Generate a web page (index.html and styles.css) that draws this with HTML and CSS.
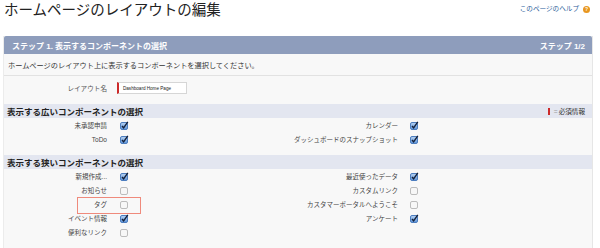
FILE: index.html
```html
<!DOCTYPE html>
<html lang="ja">
<head>
  <meta charset="UTF-8" />
  <title>ホームページのレイアウトの編集</title>
  <link rel="stylesheet" href="styles.css">
</head>
<body>

  <!-- Cabecera de página -->
  <div class="page-head">
    <h1>ホームページのレイアウトの編集</h1>
    <a class="help" href="#">このページのヘルプ <span class="help-icon">?</span></a>
  </div>

  <!-- Panel principal -->
  <div class="panel">
    <div class="panel-head">
      <span>ステップ 1. 表示するコンポーネントの選択</span>
      <span>ステップ 1/2</span>
    </div>

    <p class="intro">ホームページのレイアウト上に表示するコンポーネントを選択してください。</p>

    <div class="name-row">
      <label>レイアウト名</label>
      <span class="req-input">Dashboard Home Page</span>
    </div>

    <div class="section-head">
      <h3>表示する広いコンポーネントの選択</h3>
      <span class="legend"><i class="req-mark"></i><span class="eq">=</span> 必須情報</span>
    </div>
    <div class="opts">
      <div class="opt-row">
        <span class="lbl">未承認申請</span><span class="cb on"></span>
        <span class="lbl">カレンダー</span><span class="cb on"></span>
      </div>
      <div class="opt-row">
        <span class="lbl">ToDo</span><span class="cb on"></span>
        <span class="lbl">ダッシュボードのスナップショット</span><span class="cb on"></span>
      </div>
    </div>

    <div class="section-head second">
      <h3>表示する狭いコンポーネントの選択</h3>
    </div>
    <div class="opts">
      <div class="opt-row">
        <span class="lbl">新規作成...</span><span class="cb on"></span>
        <span class="lbl">最近使ったデータ</span><span class="cb on"></span>
      </div>
      <div class="opt-row">
        <span class="lbl">お知らせ</span><span class="cb"></span>
        <span class="lbl">カスタムリンク</span><span class="cb"></span>
      </div>
      <div class="opt-row marked">
        <span class="lbl">タグ</span><span class="cb"></span>
        <span class="lbl">カスタマーポータルへようこそ</span><span class="cb"></span>
        <span class="highlight"></span>
      </div>
      <div class="opt-row">
        <span class="lbl">イベント情報</span><span class="cb on"></span>
        <span class="lbl">アンケート</span><span class="cb on"></span>
      </div>
      <div class="opt-row">
        <span class="lbl">便利なリンク</span><span class="cb"></span>
        <span class="lbl"></span><span></span>
      </div>
    </div>
  </div>

  <script>
    // dibujar las casillas
    const CHECKED = '<svg width="9" height="9" viewBox="0 0 9 9"><defs><linearGradient id="g" x1="0" y1="0" x2="0" y2="1"><stop offset="0" stop-color="#b9d4f3"/><stop offset="1" stop-color="#5d93d8"/></linearGradient></defs><rect x="0.5" y="1.5" width="7" height="7" rx="1.5" fill="url(#g)" stroke="#4c7dbf"/><path d="M2 5 L3.6 6.8 L7.8 0.8" fill="none" stroke="#14213a" stroke-width="1.4"/></svg>';
    const EMPTY = '<svg width="9" height="9" viewBox="0 0 9 9"><rect x="0.5" y="1.5" width="7" height="7" rx="1.5" fill="#f7f7f7" stroke="#bcbcbc"/></svg>';
    document.querySelectorAll('.cb').forEach(el => {
      el.innerHTML = el.classList.contains('on') ? CHECKED : EMPTY;
    });
  </script>

</body>
</html>
```

FILE: styles.css
```css
/* Página de edición de layout */
body {
  margin: 0;
  background: #fff;
  color: #333;
  font-family: "Liberation Sans", "Noto Sans CJK JP", sans-serif;
}

.page-head {
  display: flex;
  justify-content: space-between;
  align-items: flex-start;
  height: 36px;
  padding: 0 10px 0 4px;
}

.page-head h1 {
  margin: 1px 0 0 0;
  font-size: 14.5px;
  line-height: 18px;
  font-weight: normal;
  color: #222;
}

.help {
  display: flex;
  align-items: center;
  gap: 4px;
  margin-top: 4px;
  font-size: 6.6px;
  line-height: 10px;
  color: #2a5d9a;
  text-decoration: none;
}

.help-icon {
  display: inline-flex;
  justify-content: center;
  align-items: center;
  width: 7px;
  height: 7px;
  border-radius: 50%;
  background: #e8961e;
  color: #fff;
  font-size: 5px;
  font-weight: bold;
}

.panel {
  margin: 0 7px 0 3px;
  background: #f8f8f8;
  border-right: 1px solid #e6e6e6;
  border-left: 1px solid #ececec;
  height: 220px;
}

.panel-head {
  display: flex;
  justify-content: space-between;
  align-items: center;
  height: 18px;
  padding: 0 7px 0 8px;
  background: #8e9dbc;
  border-radius: 2px 2px 0 0;
  color: #fff;
  font-size: 8px;
  font-weight: bold;
}

.intro {
  margin: 0;
  padding: 7px 4px 4px;
  line-height: 10px;
  font-size: 7.2px;
  color: #333;
  border-bottom: 1px solid #e2e2e2;
}

.name-row {
  display: flex;
  align-items: center;
  padding: 6px 0 10px;
}

.name-row label {
  width: 103px;
  text-align: right;
  font-size: 6.6px;
  color: #555;
}

.req-input {
  display: flex;
  align-items: center;
  margin-left: 10px;
  height: 10px;
  width: 63px;
  padding-left: 4px;
  background: #fff;
  border: 1px solid #d6d6d6;
  border-left: 2px solid #cc2a2a;
  font-size: 4.6px;
  color: #222;
}

.section-head {
  display: flex;
  justify-content: space-between;
  align-items: center;
  height: 14px;
  padding: 0 7px 0 3px;
  background: #e3e6f0;
}

.section-head.second {
  margin-top: 9px;
}

.section-head h3 {
  margin: 0;
  font-size: 8.5px;
  font-weight: bold;
  color: #222;
}

.legend {
  display: flex;
  align-items: center;
  font-size: 6.6px;
  color: #333;
}

.req-mark {
  display: inline-block;
  width: 2px;
  height: 7px;
  background: #cc2a2a;
  margin-right: 4px;
}

.eq {
  color: #999;
  margin-right: 1px;
}

.opt-row {
  position: relative;
  display: grid;
  grid-template-columns: 103px 60px 231px auto;
  align-items: center;
  height: 14px;
}

.lbl {
  text-align: right;
  font-size: 6.5px;
  color: #444;
  white-space: nowrap;
}

.cb {
  display: flex;
  align-items: center;
  height: 9px;
  padding-left: 13px;
}

.cb + .lbl + .cb {
  padding-left: 12px;
}

.highlight {
  position: absolute;
  left: 73px;
  top: 0;
  width: 62px;
  height: 15px;
  border: 1px solid #ef8a7c;
}
```
